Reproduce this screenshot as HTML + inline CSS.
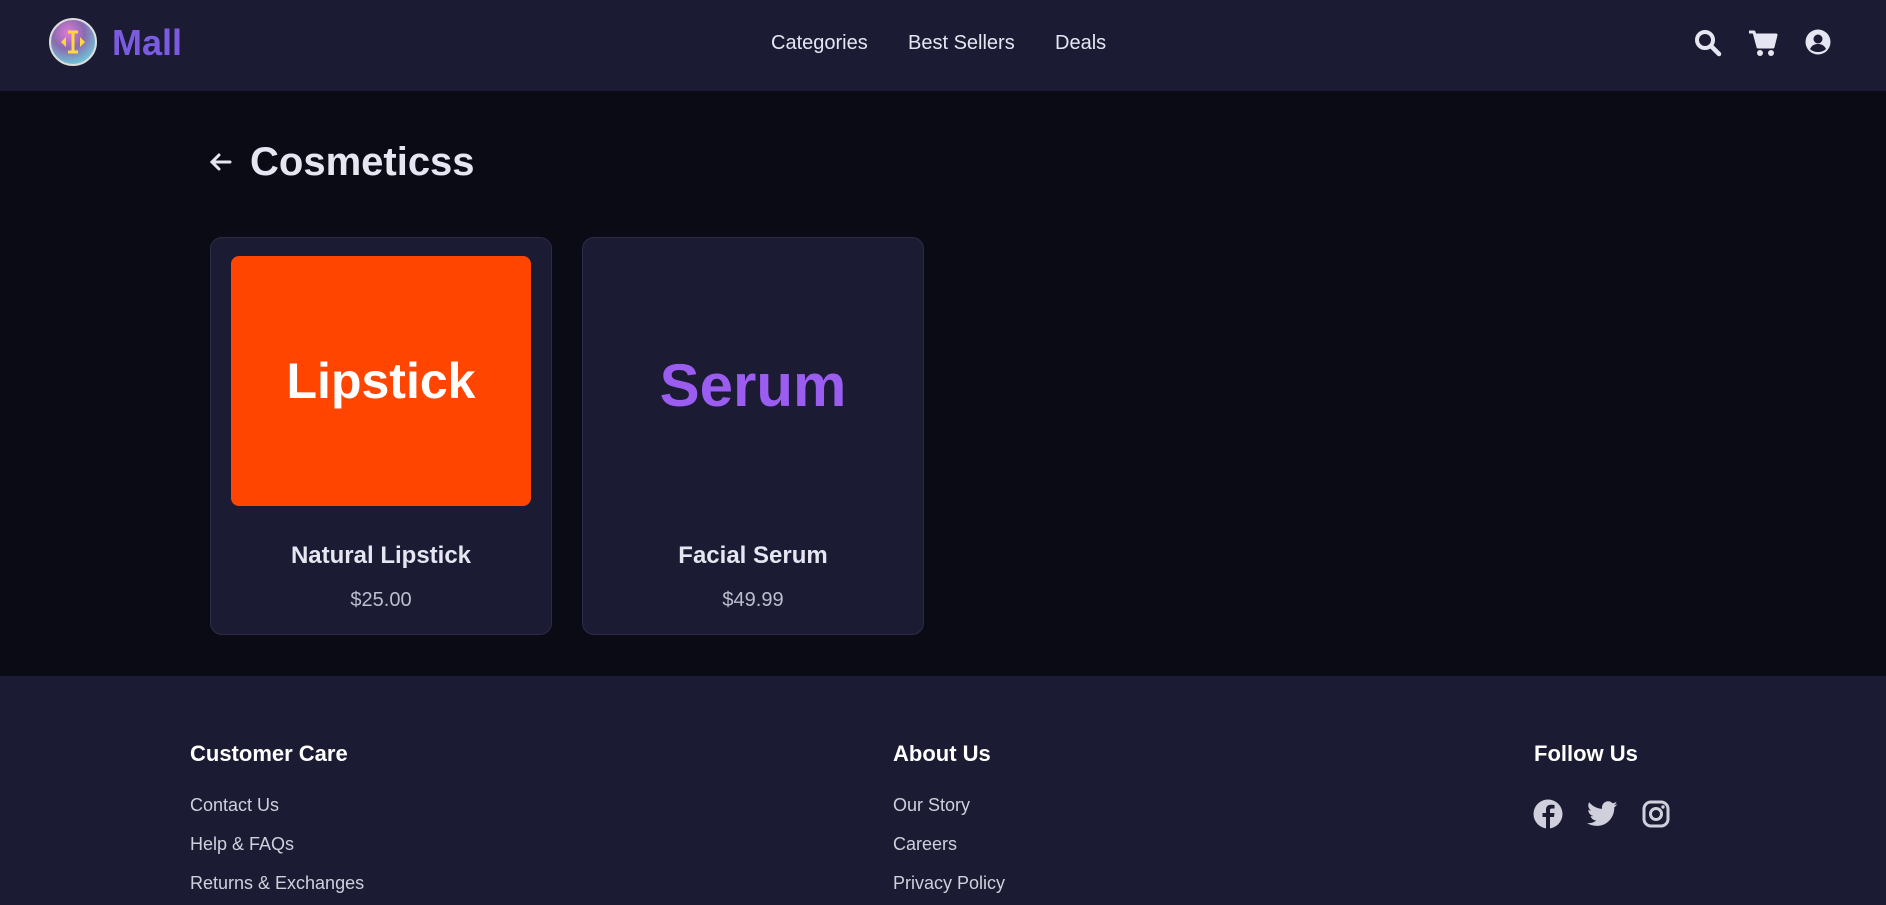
<!DOCTYPE html>
<html><head><meta charset="utf-8"><style>
*{margin:0;padding:0;box-sizing:border-box}
body{width:1886px;height:905px;overflow:hidden;background:#0b0b16;font-family:"Liberation Sans",sans-serif;position:relative}
.hdr{position:absolute;left:0;top:0;width:1886px;height:91px;background:#1b1b33}
.abs{position:absolute}
.nav{font-size:20px;color:#e6e6f2;top:32px}
.card{position:absolute;top:237px;width:342px;height:398px;background:#1b1b33;border:1px solid #2c2c48;border-radius:12px}
.name{position:absolute;left:0;right:0;top:542px;text-align:center;font-weight:bold;font-size:24px;color:#e6e6f2}
.price{position:absolute;left:0;right:0;top:589px;text-align:center;font-size:20px;color:#bdbdd0}
.ftr{position:absolute;left:0;top:676px;width:1886px;height:229px;background:#1b1b33}
.fh{position:absolute;top:741px;font-size:22px;font-weight:bold;color:#fff}
.fl{position:absolute;font-size:18px;color:#d0d0dc}
</style></head><body>
<div class="hdr"></div>
<svg class="abs" style="left:49px;top:18px" width="48" height="48" viewBox="0 0 48 48">
<defs><radialGradient id="g" cx="0.4" cy="0.3" r="0.7"><stop offset="0" stop-color="#e07ad8"/><stop offset="0.5" stop-color="#8a6ab0"/><stop offset="1" stop-color="#6fc6d8"/></radialGradient></defs>
<circle cx="24" cy="24" r="23" fill="url(#g)" stroke="#ddd" stroke-width="2"/>
<path d="M19 14h10M24 14v20M19 34h10" stroke="#ffd840" stroke-width="3"/>
<path d="M12 24l5-5v10zM36 24l-5-5v10z" fill="#ffd840"/>
</svg>
<div class="abs" style="left:112px;top:22px;font-size:36px;font-weight:bold;color:#7b5ce0">Mall</div>
<div class="abs nav" style="left:771px">Categories</div>
<div class="abs nav" style="left:908px">Best Sellers</div>
<div class="abs nav" style="left:1055px">Deals</div>
<svg class="abs" style="left:1694px;top:29px" width="28" height="28" viewBox="0 0 28 28"><circle cx="11" cy="11" r="8" fill="none" stroke="#e6e6f2" stroke-width="4"/><path d="M17 17l8 8" stroke="#e6e6f2" stroke-width="4.5" stroke-linecap="round"/></svg>
<svg class="abs" style="left:1748px;top:29px" width="30" height="28" viewBox="0 0 30 28"><path d="M1 3h5l4 15h15l3-12H8" fill="#e6e6f2" stroke="#e6e6f2" stroke-width="3" stroke-linejoin="round"/><circle cx="12" cy="24" r="3" fill="#e6e6f2"/><circle cx="23" cy="24" r="3" fill="#e6e6f2"/></svg>
<svg class="abs" style="left:1805px;top:29px" width="26" height="26" viewBox="0 0 26 26"><circle cx="13" cy="13" r="12.5" fill="#e6e6f2"/><circle cx="13" cy="10" r="4.5" fill="#1b1b33"/><path d="M5 20c2-4 5-5 8-5s6 1 8 5c-2 2-5 3-8 3s-6-1-8-3z" fill="#1b1b33"/></svg>
<svg class="abs" style="left:208px;top:152px" width="24" height="20" viewBox="0 0 24 20"><path d="M22 10H4M11 3L4 10l7 7" stroke="#e6e6f2" stroke-width="3" fill="none" stroke-linecap="round"/></svg>
<div class="abs" style="left:250px;top:140px;font-size:40px;font-weight:bold;color:#e6e6f2">Cosmeticss</div>
<div class="card" style="left:210px"></div>
<div class="card" style="left:582px"></div>
<div class="abs" style="left:231px;top:256px;width:300px;height:250px;background:#ff4500;border-radius:8px;color:#fff;font-size:50px;font-weight:bold;text-align:center;line-height:250px">Lipstick</div>
<div class="abs" style="left:582px;top:256px;width:342px;height:260px;color:#9b5cf0;font-size:60px;font-weight:bold;text-align:center;line-height:260px">Serum</div>
<div class="abs" style="left:210px;width:342px;top:0;height:905px"><div class="name">Natural Lipstick</div><div class="price">$25.00</div></div>
<div class="abs" style="left:582px;width:342px;top:0;height:905px"><div class="name">Facial Serum</div><div class="price">$49.99</div></div>
<div class="ftr"></div>
<div class="fh" style="left:190px">Customer Care</div>
<div class="fh" style="left:893px">About Us</div>
<div class="fh" style="left:1534px">Follow Us</div>
<div class="fl" style="left:190px;top:795px">Contact Us</div>
<div class="fl" style="left:190px;top:834px">Help &amp; FAQs</div>
<div class="fl" style="left:190px;top:873px">Returns &amp; Exchanges</div>
<div class="fl" style="left:893px;top:795px">Our Story</div>
<div class="fl" style="left:893px;top:834px">Careers</div>
<div class="fl" style="left:893px;top:873px">Privacy Policy</div>
<svg class="abs" style="left:1533px;top:799px" width="30" height="30" viewBox="0 0 30 30"><circle cx="15" cy="15" r="14.5" fill="#d0d0dc"/><path d="M17 30V18h4l.5-4H17v-2.5c0-1.2.4-2 2-2h2.5V6c-.5 0-2-.2-3.5-.2-3.4 0-5 2-5 5.2V14H9.5v4H13v12z" fill="#1b1b33"/></svg>
<svg class="abs" style="left:1587px;top:801px" width="31" height="26" viewBox="0 0 24 20"><path d="M23.6 2.4c-.9.4-1.8.6-2.8.8 1-.6 1.8-1.6 2.1-2.7-.9.6-2 1-3.1 1.2C19 .7 17.8.1 16.4.1c-2.700 0-4.800 2.200-4.800 4.800 0 .4 0 .8.1 1.1C7.7 5.8 4.1 3.9 1.7.9c-.4.7-.7 1.6-.7 2.4 0 1.7.9 3.2 2.2 4-.8 0-1.5-.2-2.2-.6v.1c0 2.3 1.7 4.3 3.9 4.7-.4.1-.8.2-1.3.2-.3 0-.6 0-.9-.1.6 1.9 2.4 3.3 4.5 3.4-1.7 1.3-3.7 2.1-6 2.1-.4 0-.8 0-1.2-.1 2.1 1.4 4.7 2.2 7.4 2.2 8.9 0 13.7-7.4 13.7-13.7v-.6c1-.7 1.8-1.6 2.4-2.5z" fill="#d0d0dc"/></svg>
<svg class="abs" style="left:1642px;top:800px" width="28" height="28" viewBox="0 0 28 28"><rect x="2" y="2" width="24" height="24" rx="7" fill="none" stroke="#d0d0dc" stroke-width="3"/><circle cx="14" cy="14" r="5.5" fill="none" stroke="#d0d0dc" stroke-width="3"/><circle cx="21" cy="7" r="1.7" fill="#d0d0dc"/></svg>
</body></html>
